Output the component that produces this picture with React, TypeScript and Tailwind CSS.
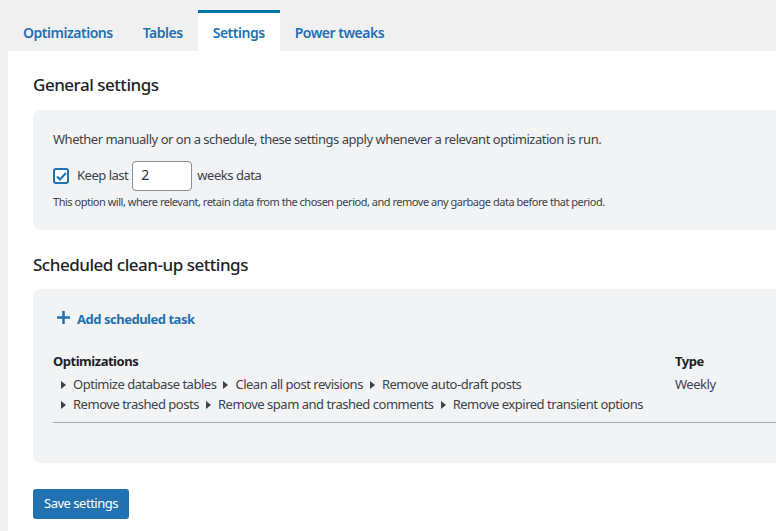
const optimizations = [
  "Optimize database tables",
  "Clean all post revisions",
  "Remove auto-draft posts",
  "Remove trashed posts",
  "Remove spam and trashed comments",
  "Remove expired transient options",
];

function Arrow() {
  return (
    <svg width="5" height="8" viewBox="0 0 5 8" className="mr-[7px] mt-[2px] inline-block">
      <path d="M0 0 L5 4 L0 8 Z" fill="#3c434a" />
    </svg>
  );
}

function OptRow({ items }: { items: string[] }) {
  return (
    <div className="flex items-center whitespace-nowrap">
      {items.map((o) => (
        <span key={o} className="mr-[7px] flex items-center">
          <Arrow />
          {o}
        </span>
      ))}
    </div>
  );
}

export default function App() {
  const tabs = ["Optimizations", "Tables", "Settings", "Power tweaks"];

  return (
    <div
      className="h-[531px] w-[776px] overflow-hidden bg-[#f0f0f1] tracking-[-0.03em] text-[#3c434a]"
      style={{ fontFamily: '"Noto Sans", "Open Sans", sans-serif' }}
    >
      {/* Tabs */}
      <div className="flex pl-[8px] pt-[10px]">
        {tabs.map((tab) => (
          <div
            key={tab}
            className={
              tab === "Settings"
                ? "h-[41px] border-t-[3px] border-[#0073aa] bg-white px-[15px] pt-[9px] text-[14px] font-semibold text-[#2271b1]"
                : "h-[41px] border-t-[3px] border-transparent px-[15px] pt-[9px] text-[14px] font-semibold text-[#2271b1]"
            }
          >
            {tab}
          </div>
        ))}
      </div>

      {/* Content */}
      <div className="ml-[8px] w-[1100px] bg-white pb-[20px] pl-[25px] pr-[25px] pt-[21px]">
        <h2 className="mb-[12px] text-[17px] font-medium text-[#1d2327]">General settings</h2>
        <div className="rounded-[8px] bg-[#f2f3f5] px-[20px] pb-[19px] pt-[20px]">
          <p className="text-[13px]">
            Whether manually or on a schedule, these settings apply whenever a relevant optimization is run.
          </p>
          <div className="mt-[12px] flex items-center text-[13px]">
            <span className="flex h-[16px] w-[16px] items-center justify-center rounded-[3px] border-2 border-[#2271b1] bg-white">
              <svg width="11" height="9" viewBox="0 0 11 9">
                <path d="M1 4.5 L4 7.5 L10 1" stroke="#2271b1" strokeWidth="2" fill="none" />
              </svg>
            </span>
            <span className="ml-[8px]">Keep last</span>
            <span className="ml-[4px] flex h-[30px] w-[60px] items-center rounded-[4px] border border-[#8c8f94] bg-white px-[8px] pb-[3px] text-[14px] text-[#2c3338]">
              2
            </span>
            <span className="ml-[5px]">weeks data</span>
          </div>
          <p className="mt-[3px] text-[11px]">
            This option will, where relevant, retain data from the chosen period, and remove any garbage data before that period.
          </p>
        </div>

        <h2 className="mb-[12px] mt-[22px] text-[17px] font-medium text-[#1d2327]">Scheduled clean-up settings</h2>
        <div className="rounded-[8px] bg-[#f2f3f5] px-[20px] pb-[40px] pt-[21px]">
          <div className="flex items-center text-[13px] font-bold text-[#2271b1]">
            <svg width="13" height="13" viewBox="0 0 13 13" className="ml-[4px] mr-[7px] mb-[4px]">
              <path d="M6.5 0 V13 M0 6.5 H13" stroke="#2271b1" strokeWidth="2.5" />
            </svg>
            Add scheduled task
          </div>

          <div className="mt-[22px] flex border-b border-[#a7aaad] pb-[8px] text-[13px]">
            <div className="w-[622px]">
              <div className="font-bold text-[#1d2327]">Optimizations</div>
              <div className="mt-[3px] pl-[8px] leading-[20px]">
                <OptRow items={optimizations.slice(0, 3)} />
                <OptRow items={optimizations.slice(3)} />
              </div>
            </div>
            <div>
              <div className="font-bold text-[#1d2327]">Type</div>
              <div className="mt-[3px] leading-[20px]">Weekly</div>
            </div>
          </div>
        </div>

        <button className="mt-[26px] h-[30px] rounded-[3px] bg-[#2271b1] px-[11px] text-[13px] text-white">
          Save settings
        </button>
      </div>
    </div>
  );
}
